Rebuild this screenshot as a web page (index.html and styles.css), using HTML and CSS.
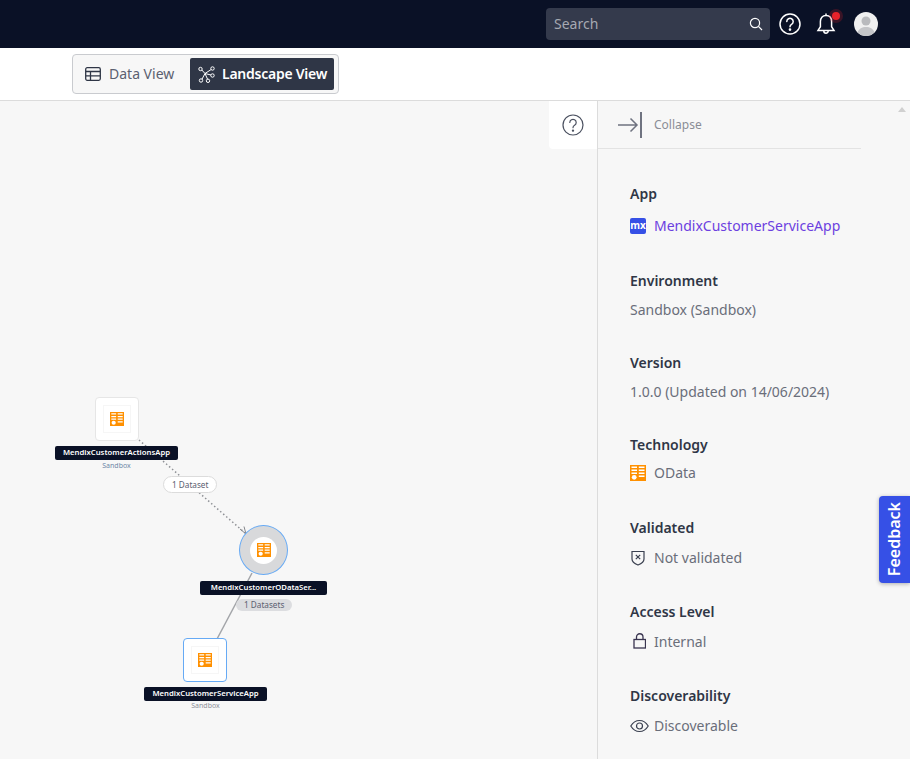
FILE: index.html

```html
<!DOCTYPE html>
<html lang="en">
<head>
    <meta charset="UTF-8">
    <meta name="viewport" content="width=device-width, initial-scale=1.0">
    <title>Landscape View</title>
    <link rel="stylesheet" href="styles.css">
</head>
<body>
    <svg class="defs" width="0" height="0">
        <symbol id="odata" viewBox="0 0 16 16">
            <rect width="16" height="16" fill="#ff9000"/>
            <path d="M1.500 2.200h5.500M8.800 2.200h5.700M1.500 5.200h5.500M8.800 5.200h5.700M1.500 8.200h5.500M8.800 8.200h5.700M8.800 11.200h5.700" stroke="#fff" stroke-width="1.400"/>
            <circle cx="4.200" cy="12.300" r="2.400" fill="#fff"/>
        </symbol>
    </svg>

    <header class="topbar">
        <div class="search">
            <span>Search</span>
            <svg width="14" height="14" viewBox="0 0 14 14" fill="none" stroke="#fff" stroke-width="1.200"><circle cx="6" cy="6" r="4.600"/><path d="M9.400 9.400 13 13"/></svg>
        </div>
        <svg class="top-help" width="22" height="22" viewBox="0 0 22 22" fill="none" stroke="#fff" stroke-width="1.500"><circle cx="11" cy="11" r="10"/><path d="M7.800 8.500a3.200 3.200 0 1 1 4.800 2.800c-1 .6-1.600 1.100-1.600 2.400" stroke-linecap="round"/><circle cx="11" cy="16.600" r=".6" fill="#fff"/></svg>
        <div class="bell">
            <svg width="20" height="24" viewBox="0 0 20 24" fill="none" stroke="#fff" stroke-width="1.500"><path d="M10 3.500c-3.600 0-5.600 2.600-5.600 6v5.200L2 18.400h16l-2.400-3.700V9.500c0-3.400-2-6-5.600-6zM10 1.500v2M7.800 19a2.200 2.200 0 0 0 4.400 0"/></svg>
            <span class="bell-dot"></span>
        </div>
        <svg class="avatar" width="24" height="24" viewBox="0 0 24 24"><circle cx="12" cy="12" r="12" fill="#f0f0f0"/><circle cx="12" cy="9" r="4.500" fill="#b9babd"/><path d="M3.500 20.500C5 16.500 8 15 12 15s7 1.500 8.500 5.500A12 12 0 0 1 3.500 20.500z" fill="#c4c5c8"/></svg>
    </header>

    <div class="toolbar">
        <div class="switch">
            <div class="tab">
                <svg width="16" height="14" viewBox="0 0 16 14" fill="none" stroke="#2f3646" stroke-width="1.300"><rect x=".7" y=".7" width="14.600" height="12.600" rx="1.500"/><path d="M.7 4.500h14.600M.7 8.800h14.600M5.500 4.500v8.800"/></svg>
                <span>Data View</span>
            </div>
            <div class="tab active">
                <svg width="17" height="17" viewBox="0 0 17 17" fill="none" stroke="#fff" stroke-width="1"><circle cx="2.500" cy="3" r="1.700"/><circle cx="14.500" cy="2.500" r="1.700"/><circle cx="3" cy="14.500" r="1.700"/><circle cx="10" cy="14.800" r="1.700"/><circle cx="14.500" cy="9.500" r="1.700"/><path d="M3.800 4 7 7.500l6.200-4M7 7.500 4 13.200M7 7.500l2.500 5.600M7 7.500l6 1.500"/></svg>
                <span>Landscape View</span>
            </div>
        </div>
    </div>

    <main class="main">
        <section class="canvas">
            <button class="help-tab">
                <svg width="22" height="22" viewBox="0 0 22 22" fill="none" stroke="#4b5160" stroke-width="1.200"><circle cx="11" cy="11" r="10"/><path d="M7.800 8.500a3.200 3.200 0 1 1 4.800 2.800c-1 .6-1.600 1.100-1.600 2.400" stroke-linecap="round"/><circle cx="11" cy="16.600" r=".6" fill="#4b5160"/></svg>
            </button>

            <svg class="edges" width="597" height="658" viewBox="0 0 597 658" fill="none">
                <path d="M139 339 245 432" stroke="#8f9196" stroke-width="1.500" stroke-dasharray="1.500 2.500"/>
                <path d="M240 428l6 5-2-7.500" stroke="#85878c" stroke-width="1"/>
                <path d="M252 472 217 538" stroke="#a3a5a9" stroke-width="1.500"/>
            </svg>

            <div class="node" style="left:95px;top:296px">
                <span class="node-icon"><svg width="14" height="14"><use href="#odata"/></svg></span>
            </div>
            <div class="node-label" style="left:55px;top:345px;width:123px">MendixCustomerActionsApp</div>
            <div class="node-sub" style="left:55px;top:360px;width:123px;color:#6f87a8">Sandbox</div>
            <div class="edge-pill" style="left:163px;top:375px">1 Dataset</div>

            <div class="node-circle" style="left:239px;top:424px">
                <span class="node-circle-in"><svg width="14" height="14"><use href="#odata"/></svg></span>
            </div>
            <div class="node-label" style="left:200px;top:480px;width:127px">MendixCustomerODataSer...</div>
            <div class="edge-pill edge-pill-grey" style="left:236px;top:498px">1 Datasets</div>

            <div class="node node-selected" style="left:183px;top:537px">
                <span class="node-icon"><svg width="14" height="14"><use href="#odata"/></svg></span>
            </div>
            <div class="node-label" style="left:144px;top:586px;width:123px">MendixCustomerServiceApp</div>
            <div class="node-sub" style="left:144px;top:600px;width:123px">Sandbox</div>
        </section>

        <aside class="panel">
            <div class="collapse">
                <svg width="26" height="26" viewBox="0 0 26 26" fill="none" stroke="#6f7380" stroke-width="1.500"><path d="M0 13h19M12.500 6.500 19 13l-6.500 6.500"/><path d="M23 0v26" stroke-width="2"/></svg>
                <span>Collapse</span>
            </div>
            <div class="details">
                <div class="field field-app">
                    <h4>App</h4>
                    <div class="value value-link">
                        <span class="mx">mx</span>
                        <span>MendixCustomerServiceApp</span>
                    </div>
                </div>
                <div class="field">
                    <h4>Environment</h4>
                    <div class="value">Sandbox (Sandbox)</div>
                </div>
                <div class="field">
                    <h4>Version</h4>
                    <div class="value">1.0.0 (Updated on 14/06/2024)</div>
                </div>
                <div class="field field-tech">
                    <h4>Technology</h4>
                    <div class="value">
                        <svg width="16" height="16"><use href="#odata"/></svg>
                        <span>OData</span>
                    </div>
                </div>
                <div class="field field-wide">
                    <h4>Validated</h4>
                    <div class="value">
                        <svg width="16" height="16" viewBox="0 0 16 16" fill="none" stroke="#3a4050" stroke-width="1.200"><path d="M2 1.500h12V9c0 3-3 4.800-6 6-3-1.200-6-3-6-6z"/><path d="M5.800 4.800l4.400 4.400M10.200 4.800 5.800 9.200"/></svg>
                        <span>Not validated</span>
                    </div>
                </div>
                <div class="field field-wide">
                    <h4>Access Level</h4>
                    <div class="value">
                        <svg class="lock" width="16" height="16" viewBox="0 0 16 16" fill="none" stroke="#3a3550" stroke-width="1.300"><rect x="4" y="6.500" width="11.500" height="8.500"/><path d="M6.500 6.500V4a3.200 3.200 0 0 1 6.500 0v2.500"/></svg>
                        <span>Internal</span>
                    </div>
                </div>
                <div class="field field-wide">
                    <h4>Discoverability</h4>
                    <div class="value">
                        <svg class="eye" width="19" height="14" viewBox="0 0 19 14" fill="none" stroke="#3a4050" stroke-width="1.200"><path d="M.8 7C3 3.300 6 1.500 9.500 1.500S16 3.300 18.200 7c-2.200 3.700-5.200 5.500-8.700 5.500S3 10.700.8 7z"/><circle cx="9.500" cy="7" r="3"/></svg>
                        <span>Discoverable</span>
                    </div>
                </div>
            </div>
            <span class="scroll-up"></span>
        </aside>
    </main>

    <div class="feedback"><span>Feedback</span></div>
</body>
</html>
```

FILE: styles.css

```css
html, body {
    margin: 0;
    height: 759px;
    overflow: hidden;
}
body {
    font-family: "Noto Sans", Arial, sans-serif;
    color: #2f3646;
    background-color: #f7f7f7;
    position: relative;
}
.defs {
    position: absolute;
}

/* top bar */
.topbar {
    height: 48px;
    background-color: #0a1126;
    display: flex;
    align-items: center;
    justify-content: flex-end;
    padding-right: 32px;
}
.search {
    width: 224px;
    height: 32px;
    box-sizing: border-box;
    padding: 0 7px 0 8px;
    background-color: #343a4c;
    border-radius: 4px;
    display: flex;
    align-items: center;
    justify-content: space-between;
    color: #a6a9b2;
    font-size: 14px;
}
.search span {
    margin-bottom: 2px;
}
.top-help {
    margin-left: 9px;
}
.bell {
    position: relative;
    width: 20px;
    height: 24px;
    margin-left: 15px;
}
.bell-dot {
    position: absolute;
    top: 0;
    right: -4px;
    width: 8px;
    height: 8px;
    background-color: #e8222a;
    border-radius: 50%;
    box-shadow: 0 0 0 3px rgba(232, 34, 42, 0.22);
}
.avatar {
    margin-left: 18px;
}

/* view switch */
.toolbar {
    height: 53px;
    box-sizing: border-box;
    background-color: #fff;
    border-bottom: 1px solid #dcdcdc;
    padding: 6px 0 0 72px;
}
.switch {
    display: inline-flex;
    align-items: center;
    height: 40px;
    width: 267px;
    box-sizing: border-box;
    padding: 3px 4px 3px 12px;
    justify-content: space-between;
    background-color: #f7f7f7;
    border: 1px solid #c9cbcf;
    border-radius: 4px;
}
.tab {
    display: flex;
    align-items: center;
    gap: 8px;
    font-size: 14px;
    color: #5b6070;
}
.tab span {
    margin-bottom: 2px;
}
.tab.active {
    height: 32px;
    width: 144px;
    box-sizing: border-box;
    padding: 0 0 0 8px;
    gap: 7px;
    background-color: #2f3646;
    border-radius: 2px;
    color: #fff;
    font-weight: 600;
    letter-spacing: -0.25px;
}

/* main area */
.main {
    display: flex;
    height: 658px;
}
.canvas {
    position: relative;
    width: 597px;
    flex: none;
}
.help-tab {
    position: absolute;
    top: 0;
    right: 0;
    width: 48px;
    height: 48px;
    padding: 0;
    border: 0;
    border-radius: 0 0 0 4px;
    background-color: #fff;
    display: flex;
    align-items: center;
    justify-content: center;
}
.edges {
    position: absolute;
    left: 0;
    top: 0;
}
.node {
    position: absolute;
    width: 44px;
    height: 44px;
    box-sizing: border-box;
    background-color: #fff;
    border: 1px solid #e6e6e6;
    border-radius: 4px;
    display: flex;
    align-items: center;
    justify-content: center;
}
.node-selected {
    border: 1.500px solid #66aaf5;
}
.node-icon {
    width: 26px;
    height: 26px;
    border: 1px solid #f6f6f6;
    display: flex;
    align-items: center;
    justify-content: center;
}
.node-circle {
    position: absolute;
    width: 49px;
    height: 50px;
    box-sizing: border-box;
    border: 1.500px solid #66aaf5;
    border-radius: 50%;
    background-color: #d8d9db;
    display: flex;
    align-items: center;
    justify-content: center;
}
.node-circle-in {
    width: 27px;
    height: 27px;
    border-radius: 50%;
    background-color: #fff;
    display: flex;
    align-items: center;
    justify-content: center;
}
.node-label {
    position: absolute;
    height: 14px;
    line-height: 12px;
    background-color: #0a1126;
    border-radius: 2px;
    color: #fff;
    font-size: 7.700px;
    font-weight: 600;
    text-align: center;
    white-space: nowrap;
}
.node-sub {
    position: absolute;
    font-size: 7px;
    line-height: 10px;
    color: #8d909a;
    text-align: center;
}
.edge-pill {
    position: absolute;
    height: 17px;
    box-sizing: border-box;
    padding: 0 8px;
    border: 1px solid #dcdcdc;
    border-radius: 9px;
    background-color: #fff;
    font-size: 8.200px;
    line-height: 15px;
    color: #5b6070;
}
.edge-pill-grey {
    height: 12px;
    line-height: 12px;
    border: 0;
    background-color: #dcdde0;
}

/* right panel */
.panel {
    flex: 1;
    position: relative;
    border-left: 1px solid #dcdcdc;
}
.collapse {
    width: 263px;
    height: 48px;
    box-sizing: border-box;
    border-bottom: 1px solid #e3e3e3;
    padding-left: 20px;
    display: flex;
    align-items: center;
    gap: 10px;
    font-size: 12px;
    color: #8a8d96;
}
.details {
    padding: 34px 0 0 32px;
}
.field {
    margin-bottom: 31px;
}
.field h4 {
    margin: 0 0 7px;
    font-size: 14px;
    line-height: 22px;
    font-weight: 600;
    color: #2f3646;
}
.value {
    display: flex;
    align-items: center;
    gap: 8px;
    font-size: 14px;
    line-height: 22px;
    color: #6a6e7a;
    white-space: nowrap;
}
.field-app {
    margin-bottom: 33px;
}
.field-app h4 {
    margin-bottom: 10px;
}
.field-tech {
    margin-bottom: 33px;
}
.field-tech h4 {
    margin-bottom: 6px;
}
.field-wide {
    margin-bottom: 32px;
}
.field-wide h4 {
    margin-bottom: 8px;
}
.value-link {
    color: #6c3fe0;
}
.mx {
    width: 16px;
    height: 16px;
    background-color: #3650e6;
    border-radius: 2px;
    color: #fff;
    font-size: 10px;
    font-weight: 700;
    line-height: 15px;
    text-align: center;
}
.lock {
    margin-top: -3px;
}
.eye {
    margin-right: -3px;
}
.scroll-up {
    position: absolute;
    top: 6px;
    right: 4px;
    border: 4px solid transparent;
    border-top: 0;
    border-bottom: 5px solid #d0d0d0;
}

.feedback {
    position: absolute;
    top: 496px;
    right: 0;
    width: 31px;
    height: 87px;
    box-sizing: border-box;
    padding-right: 2px;
    background-color: #3650e6;
    border-radius: 4px 0 0 4px;
    box-shadow: 0 1px 4px rgba(0, 0, 0, 0.3);
    display: flex;
    align-items: center;
    justify-content: center;
}
.feedback span {
    writing-mode: vertical-rl;
    transform: rotate(180deg);
    color: #fff;
    font-size: 16px;
    font-weight: 600;
}
```
